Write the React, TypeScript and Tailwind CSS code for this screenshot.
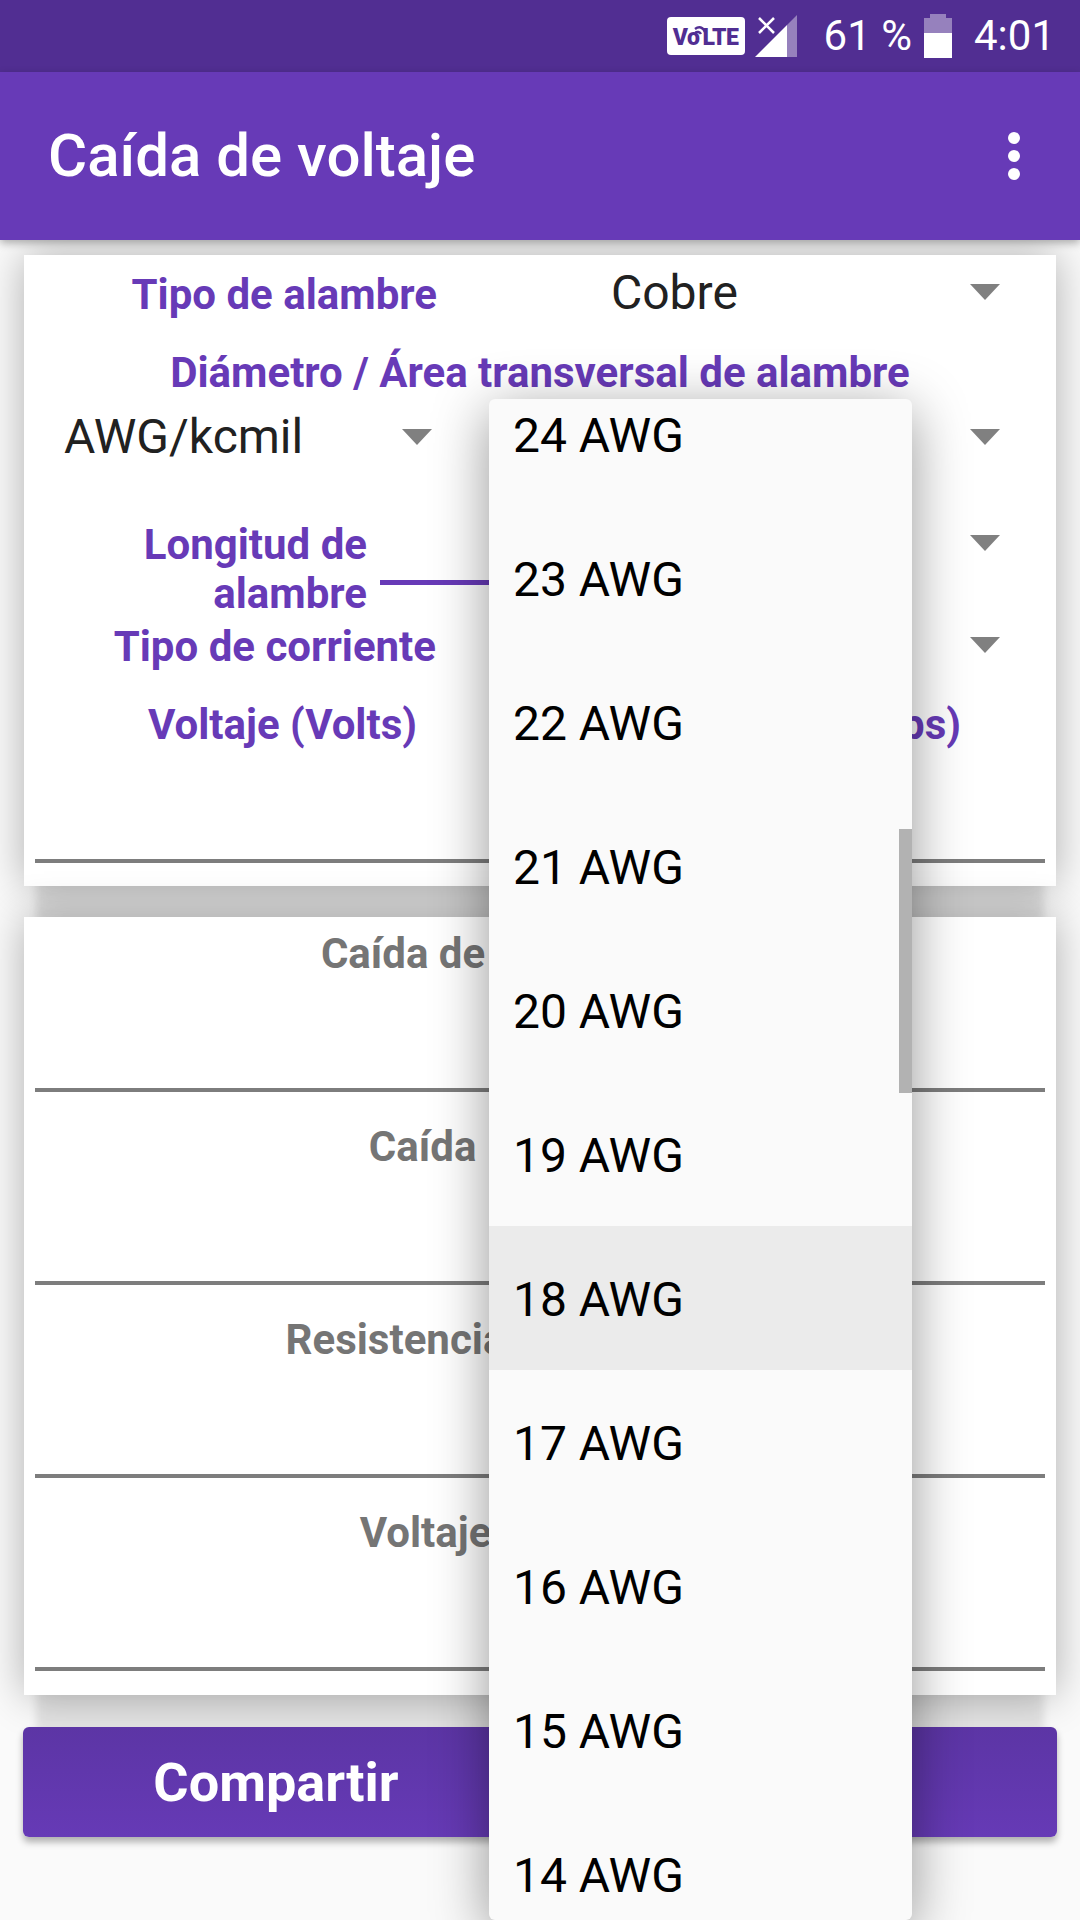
const purple = "text-[#673ab7]";
const cardShadow = "shadow-[0_0_40px_rgba(0,0,0,0.3),0_48px_8px_-12px_rgba(0,0,0,0.09)]";

function Arrow() {
  return (
    <svg width="30" height="16" viewBox="0 0 30 16" className="shrink-0">
      <path d="M0 0H30L15 16Z" fill="#808080" />
    </svg>
  );
}

function ResultBlock({ label, height, top }: { label: string; height: string; top: string }) {
  return (
    <div className={`${height} ${top} flex flex-col`}>
      <p className="h-[74px] text-center text-[42px] leading-[74px] font-bold text-[#757575] whitespace-nowrap">
        {label}
      </p>
      <div className="mt-auto h-[4px] bg-[#7d7d7d]" />
    </div>
  );
}

const sizes = ["24", "23", "22", "21", "20", "19", "18", "17", "16", "15", "14"];

export default function App() {
  return (
    <div
      className="relative h-[1920px] w-[1080px] overflow-hidden bg-[#fafafa]"
      style={{ fontFamily: "Roboto, sans-serif" }}
    >
      {/* status bar */}
      <div className="flex h-[72px] items-center justify-end bg-[#512e92] pr-[25px] text-white">
        <div className="relative flex h-[38px] w-[78px] items-end justify-center rounded-[4px] bg-white pb-[6px] text-[23px] leading-none font-black tracking-[-0.5px] text-[#512e92]">
          <span>Vo</span>
          <span className="ml-[3px]">LTE</span>
          <svg width="14" height="14" viewBox="0 0 14 14" className="absolute top-[7px] left-[26px]">
            <path d="M2 5C6 2 10 3 12 8M2 9C4 7 7 8 8 10" fill="none" stroke="#512e92" strokeWidth="2.4" />
          </svg>
        </div>
        <svg width="44" height="44" viewBox="0 0 44 44" className="ml-[9px]">
          <path d="M1 43L33 11V43Z" fill="#fff" />
          <path d="M33 11L43 1V43H33Z" fill="#fff" fillOpacity="0.4" />
          <path d="M5 4L20 19M20 4L5 19" stroke="#fff" strokeWidth="2.5" />
        </svg>
        <span className="ml-[26px] text-[42px] leading-none">61 %</span>
        <svg width="28" height="44" viewBox="0 0 28 44" className="ml-[12px]">
          <path d="M6 0H22V4H28V19H0V4H6Z" fill="#fff" fillOpacity="0.4" />
          <path d="M0 19H28V44H0Z" fill="#fff" />
        </svg>
        <span className="ml-[22px] text-[42px] leading-none">4:01</span>
      </div>

      {/* app bar */}
      <div className="relative flex h-[168px] items-center justify-between bg-[#673ab7] pr-[60px] pl-[48px] shadow-[0_3px_8px_rgba(0,0,0,0.3)]">
        <h1 className="text-[60px] font-medium text-white">Caída de voltaje</h1>
        <div className="flex flex-col gap-[6px]">
          <div className="h-[12px] w-[12px] rounded-full bg-white" />
          <div className="h-[12px] w-[12px] rounded-full bg-white" />
          <div className="h-[12px] w-[12px] rounded-full bg-white" />
        </div>
      </div>

      {/* data card */}
      <div className={`mx-[24px] mt-[15px] flex h-[631px] flex-col bg-white px-[11px] ${cardShadow}`}>
        <div className="flex h-[78px] items-center">
          <p className={`w-[402px] text-right text-[42px] font-bold ${purple}`}>Tipo de alambre</p>
          <p className="mt-[-2px] ml-[174px] text-[48px] text-[#212121]">Cobre</p>
          <div className="mt-[-4px] mr-[45px] ml-auto">
            <Arrow />
          </div>
        </div>
        <p className={`h-[78px] pt-[1px] text-center text-[42px] leading-[78px] font-bold whitespace-nowrap ${purple}`}>
          Diámetro / Área transversal de alambre
        </p>
        <div className="flex h-[52px] items-center">
          <div className="flex w-[397px] items-center justify-between pl-[29px]">
            <p className="text-[48px] text-[#212121]">AWG/kcmil</p>
            <Arrow />
          </div>
          <div className="mr-[45px] ml-auto">
            <Arrow />
          </div>
        </div>
        <div className="mt-[57px] flex h-[99px]">
          <p className={`w-[332px] text-right text-[42px] leading-[49px] font-bold ${purple}`}>
            Longitud de
            <br />
            alambre
          </p>
          <div className="mt-[60px] ml-[13px] h-[5px] w-[150px] bg-[#673ab7]" />
          <div className="mt-[15px] mr-[45px] ml-auto">
            <Arrow />
          </div>
        </div>
        <div className="flex h-[54px] items-center">
          <p className={`w-[401px] text-right text-[42px] font-bold ${purple}`}>Tipo de corriente</p>
          <div className="mt-[-3px] mr-[45px] ml-auto">
            <Arrow />
          </div>
        </div>
        <div className="mt-[26px] flex h-[50px] items-center">
          <p className={`w-[495px] text-center text-[42px] font-bold ${purple}`}>Voltaje (Volts)</p>
          <p className={`w-[431px] text-right text-[42px] font-bold ${purple}`}>Corriente (Amps)</p>
        </div>
        <div className="mt-auto mb-[23px] h-[4px] bg-[#7d7d7d]" />
      </div>

      {/* results card */}
      <div className={`mx-[24px] mt-[31px] flex h-[778px] flex-col bg-white px-[11px] ${cardShadow}`}>
        <ResultBlock label="Caída de voltaje (Volts)" height="h-[175px]" top="" />
        <ResultBlock label={"Caída\u00a0\u00a0de voltaje%"} height="h-[193px]" top="pt-[18px]" />
        <ResultBlock label="Resistencia de alambre (Ω)" height="h-[193px]" top="pt-[18px]" />
        <ResultBlock label="Voltaje en la carga:" height="h-[193px]" top="pt-[18px]" />
      </div>

      {/* buttons */}
      <div className="relative mx-[23px] mt-[32px] flex h-[110px] rounded-[6px] bg-gradient-to-b from-[#5c35a5] to-[#663ab6] shadow-[0_5px_7px_rgba(0,0,0,0.3)]">
        <p className="flex w-[506px] items-center justify-center text-[54px] font-bold text-white">Compartir</p>
        <p className="flex flex-1 items-center justify-center text-[54px] font-bold text-white">Limpiar</p>
      </div>

      {/* open spinner list */}
      <div className="absolute top-[399px] left-[489px] h-[1521px] w-[423px] overflow-hidden rounded-[6px] bg-[#fafafa] shadow-[0_12px_56px_rgba(0,0,0,0.42)]">
        <div className="mt-[-37px]">
          {sizes.map((s) => (
            <div
              key={s}
              className={`flex h-[144px] items-center pt-[4px] pl-[24px] text-[48px] text-black ${s === "18" ? "bg-[#ebebeb]" : ""}`}
            >
              {s} AWG
            </div>
          ))}
        </div>
        <div className="absolute top-[430px] right-0 h-[264px] w-[13px] bg-[#b2b2b2]" />
      </div>
    </div>
  );
}
